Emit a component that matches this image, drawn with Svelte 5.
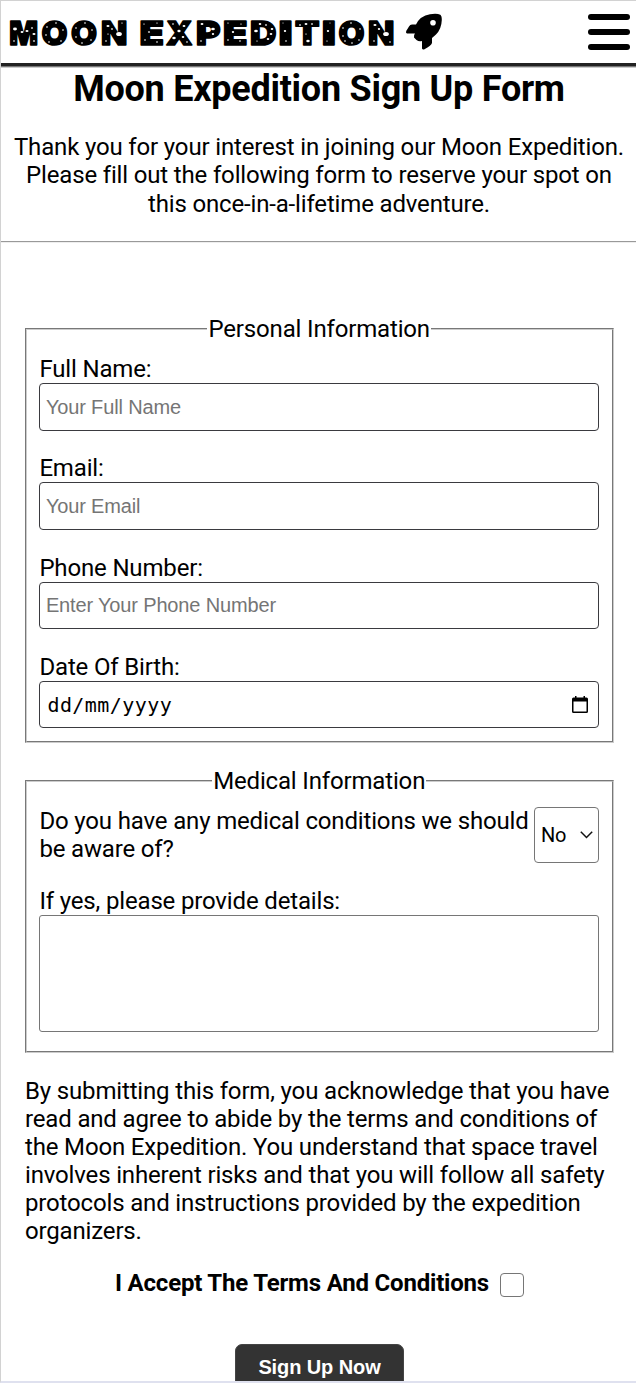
<script>
  const fields = [
    { label: 'Full Name:', hint: 'Your Full Name' },
    { label: 'Email:', hint: 'Your Email' },
    { label: 'Phone Number:', hint: 'Enter Your Phone Number' }
  ];
  // Logo letters: character, left edge, advance width
  const letters = [
    ['M', 9.3, 28.8], ['O', 41.6, 26], ['O', 71, 26], ['N', 101, 26.3],
    ['E', 139.5, 24.5], ['X', 166, 26.5], ['P', 196, 24.5], ['E', 223, 24.5], ['D', 250, 26.5],
    ['I', 278.5, 14.2], ['T', 295, 24.5], ['I', 321.7, 14.2], ['O', 338.4, 26], ['N', 368, 26.3]
  ];
  // Craters punched into the logo lettering: x, y, radius
  const craters = [
    [15, 29, 1.8], [22, 32, 1.3], [27, 31, 1.4], [32, 28, 1], [34, 34, 1.4], [14, 41, 0.8], [34, 41, 1],
    [47, 27, 0.8], [56, 23, 0.8], [63, 30, 0.8], [46, 35, 0.8], [49, 42, 0.8], [61, 41, 0.8],
    [76, 28, 0.8], [85, 23, 0.8], [92, 30, 0.8], [76, 37, 0.8], [82, 43, 0.8], [91, 40, 0.8],
    [108, 26, 1.4], [112, 29, 1], [119, 34, 2.6], [106, 41, 0.8], [122, 23, 0.7], [108, 34, 0.7],
    [144, 24, 0.7], [157, 23, 0.7], [149, 32, 1], [145, 40, 0.8], [157, 42, 0.8],
    [173, 24, 0.8], [184, 26, 1.3], [179, 31, 1.5], [174, 38, 1.6], [183, 37, 1.2], [187, 42, 0.8],
    [202, 24, 1.3], [208, 28, 1.3], [213, 29, 1.7], [213, 34, 1.1], [201, 41, 0.8],
    [228, 23, 0.7], [241, 24, 0.7], [233, 32, 1.1], [228, 40, 0.8], [240, 41, 0.8],
    [256, 31, 1.7], [260, 24, 1.2], [266, 25, 1], [272, 29, 1.2], [271, 34, 1.2], [268, 39, 1.2], [257, 41, 0.7],
    [285, 31, 1.1], [283, 23, 0.6], [286, 41, 0.8],
    [300, 25, 1], [306, 24, 1.3], [312, 24, 1], [308, 41, 1.6], [306, 34, 0.7],
    [328, 31, 1.1], [327, 41, 0.7], [330, 23, 0.6],
    [343, 28, 0.8], [351, 23, 0.8], [360, 29, 0.8], [343, 36, 0.8], [345, 41, 0.8], [352, 43, 0.8], [359, 40, 0.8],
    [375, 25, 1.4], [379, 29, 1.1], [386, 34, 2.6], [374, 41, 0.8], [390, 42, 0.8]
  ];
</script>

<div class="page">
  <header>
    <svg class="logo" width="440" height="52" viewBox="4 8 440 52" role="img" aria-label="Moon Expedition">
      {#each letters as [ch, x, w]}
        <text {x} y="44.900" textLength={w} lengthAdjust="spacingAndGlyphs">{ch}</text>
      {/each}
      {#each craters as [cx, cy, r]}
        <ellipse {cx} {cy} rx={r * 1.1} ry={r * 0.8} fill="#fff" />
      {/each}
      <path
        fill-rule="evenodd"
        d="M416 24.5Q420 16 430 14.3Q437 13.2 440.3 14.8Q441.8 15.6 441.8 20Q441.5 29 436 34.5L432 38V43Q431 46 424.5 49.2Q422.5 49.8 422 48.5V41Q419 42 416.5 40L414 37.5Q413.8 34.5 415 33.5H407Q405.5 33 406.2 31L409 26.5Q410 24.7 412 24.5ZM433 20A2.8 2.8 0 1 0 433 25.6A2.8 2.8 0 1 0 433 20Z"
      />
    </svg>
    <button class="menu" aria-label="Menu"><i></i><i></i><i></i></button>
  </header>

  <section class="intro">
    <h1>Moon Expedition Sign Up Form</h1>
    <p>Thank you for your interest in joining our Moon Expedition. Please fill out the following form to reserve your spot on this once-in-a-lifetime adventure.</p>
  </section>
  <hr />

  <form>
    <fieldset class="personal">
      <legend>Personal Information</legend>
      {#each fields as f}
        <label class="field">{f.label}<input type="text" placeholder={f.hint} /></label>
      {/each}
      <div class="field">
        Date Of Birth:
        <div class="date">
          <span>dd/mm/yyyy</span>
          <svg width="16" height="18" viewBox="0 0 16 18">
            <path fill-rule="evenodd" d="M3 0H4.5V1.5H11.5V0H13V1.5H14.5Q16 1.5 16 3V15.500Q16 17 14.500 17H1.500Q0 17 0 15.500V3Q0 1.500 1.500 1.500H3ZM1.500 5.500V15.500H14.500V5.500Z" />
          </svg>
        </div>
      </div>
    </fieldset>

    <fieldset class="medical">
      <legend>Medical Information</legend>
      <div class="question">
        <span>Do you have any medical conditions we should be aware of?</span>
        <div class="select">
          No
          <svg width="13" height="8" viewBox="0 0 13 8"><path d="M.8.8L6.500 6.500L12.200.8" fill="none" stroke="#111" stroke-width="1.500" /></svg>
        </div>
      </div>
      <label class="details">If yes, please provide details:<textarea></textarea></label>
    </fieldset>

    <p class="terms">By submitting this form, you acknowledge that you have read and agree to abide by the terms and conditions of the Moon Expedition. You understand that space travel involves inherent risks and that you will follow all safety protocols and instructions provided by the expedition organizers.</p>
    <label class="accept">I Accept The Terms And Conditions<input type="checkbox" /></label>
    <button class="submit" type="button">Sign Up Now</button>
  </form>
</div>

<style>
  :global(body) { margin: 0; background: #fff; }
  .page {
    box-sizing: border-box;
    height: 1383px;
    overflow: hidden;
    border: solid #d2d2d2;
    border-width: 1px 0 0 1px;
    border-bottom: 2px solid #dfe1ef;
    background: #fff;
    color: #000;
    font: 24px/28.1px Roboto, sans-serif;
    letter-spacing: -.16px;
  }
  header {
    box-sizing: border-box;
    height: 62px;
    margin-bottom: 1px;
    padding: 7px 6px 0 3px;
    display: flex;
    justify-content: space-between;
    align-items: flex-start;
    box-shadow: 0 3px #222, 0 4px #777, 0 5px #ccc;
  }
  .logo text {
    font: 900 33px Inter, sans-serif;
    letter-spacing: 0;
    stroke: #000;
    stroke-width: 1.6px;
    stroke-linejoin: round;
  }
  .menu {
    display: flex;
    flex-direction: column;
    gap: 9px;
    padding: 6px 0 0;
    border: 0;
    background: none;
  }
  .menu i { width: 42px; height: 6px; border-radius: 3px; background: #000; }
  .intro { height: 177px; text-align: center; }
  h1 { margin: 0; padding: 4px 0 0 1px; font-size: 36px; line-height: 42px; font-weight: 700; letter-spacing: -.26px; }
  .intro p { margin: 23px 7px 0 8px; line-height: 28.400px; }
  hr { margin: 0; border: 0; height: 1px; background: #999; box-shadow: 0 1px #eee; }
  form { padding: 73px 22px 0 24px; display: flex; flex-direction: column; }
  fieldset {
    box-sizing: border-box;
    margin: 0;
    min-width: 0;
    border: 2px groove #ccc;
  }
  legend { margin: 0 auto; padding: 0 1px; line-height: 28px; }
  .personal { height: 428px; padding: 12px 13px 0 12.400px; }
  .field { display: block; height: 99.3px; }
  .field input, .date, textarea, .select { box-sizing: border-box; border: 1.500px solid #3a3a3f; border-radius: 4px; background: #fff; }
  .field input {
    display: block;
    width: 100%;
    height: 47.500px;
    padding: 1px 6px 0 5.500px;
    font: 20px "Liberation Sans", Arial, sans-serif;
    letter-spacing: -.15px;
    color: #000;
  }
  .field input::placeholder { color: #757575; }
  .date { height: 47.500px; padding: 0 10px 0 7px; display: flex; align-items: center; justify-content: space-between; font: 20px "DejaVu Sans Mono", monospace; letter-spacing: .45px; }
  .medical { height: 286px; margin-top: 24px; padding: 12px 13px 0 12.400px; }
  .question { display: flex; height: 80px; justify-content: space-between; }
  .question span { width: 493px; }
  .select {
    width: 65px;
    height: 56px;
    padding: 0 5px 0 6px;
    display: flex;
    align-items: center;
    justify-content: space-between;
    font-size: 20px;
    border-color: #767676;
  }
  .details { display: block; }
  textarea { display: block; width: 100%; height: 117px; resize: none; border-color: #767676; border-radius: 3px; }
  .terms { margin: 24px 0 0; }
  .accept { margin: 23px 0 0; display: flex; justify-content: center; font-weight: 700; letter-spacing: -.19px; }
  .accept input {
    appearance: none;
    box-sizing: border-box;
    width: 24px;
    height: 24px;
    margin: 4px 0 0 11px;
    border: 1.500px solid #767676;
    border-radius: 4px;
  }
  .submit {
    align-self: center;
    width: 169px;
    height: 46px;
    margin-top: 47px;
    padding: 2px 0 0;
    border: 1px solid #444;
    border-radius: 7px;
    background: #333;
    color: #fff;
    font: 700 20px "Liberation Sans", Arial, sans-serif;
    letter-spacing: -.1px;
  }
</style>
